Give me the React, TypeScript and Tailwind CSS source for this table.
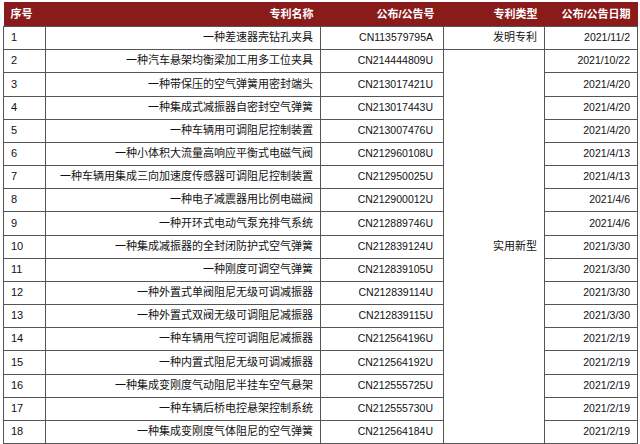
const rows: [string, string, string][] = [
  ['一种差速器壳钻孔夹具', 'CN113579795A', '2021/11/2'],
  ['一种汽车悬架均衡梁加工用多工位夹具', 'CN214444809U', '2021/10/22'],
  ['一种带保压的空气弹簧用密封端头', 'CN213017421U', '2021/4/20'],
  ['一种集成式减振器自密封空气弹簧', 'CN213017443U', '2021/4/20'],
  ['一种车辆用可调阻尼控制装置', 'CN213007476U', '2021/4/20'],
  ['一种小体积大流量高响应平衡式电磁气阀', 'CN212960108U', '2021/4/13'],
  ['一种车辆用集成三向加速度传感器可调阻尼控制装置', 'CN212950025U', '2021/4/13'],
  ['一种电子减震器用比例电磁阀', 'CN212900012U', '2021/4/6'],
  ['一种开环式电动气泵充排气系统', 'CN212889746U', '2021/4/6'],
  ['一种集成减振器的全封闭防护式空气弹簧', 'CN212839124U', '2021/3/30'],
  ['一种刚度可调空气弹簧', 'CN212839105U', '2021/3/30'],
  ['一种外置式单阀阻尼无级可调减振器', 'CN212839114U', '2021/3/30'],
  ['一种外置式双阀无级可调阻尼减振器', 'CN212839115U', '2021/3/30'],
  ['一种车辆用气控可调阻尼减振器', 'CN212564196U', '2021/2/19'],
  ['一种内置式阻尼无级可调减振器', 'CN212564192U', '2021/2/19'],
  ['一种集成变刚度气动阻尼半挂车空气悬架', 'CN212555725U', '2021/2/19'],
  ['一种车辆后桥电控悬架控制系统', 'CN212555730U', '2021/2/19'],
  ['一种集成变刚度气体阻尼的空气弹簧', 'CN212564184U', '2021/2/19'],
]

const cell = 'border border-[#555555] px-[7px] py-0 leading-none'

export default function App() {
  return (
    <div
      className="w-[640px] h-[444px] bg-white pt-[2px] pl-[3px] overflow-hidden text-[#111111]"
      style={{ fontFamily: '"Liberation Sans", "Noto Sans CJK SC", sans-serif' }}
    >
      <table className="border-collapse table-fixed w-[634px] text-[11px]">
        <colgroup>
          <col className="w-[42px]" />
          <col className="w-[275px]" />
          <col className="w-[123px]" />
          <col className="w-[101px]" />
          <col className="w-[93px]" />
        </colgroup>
        <thead>
          <tr className="h-[24px] bg-[#8a1b1b] text-white font-bold">
            <th className="px-[7px] text-left">序号</th>
            <th className="px-[7px] text-right">专利名称</th>
            <th className="px-[9px] text-right">公布/公告号</th>
            <th className="px-[7px] text-right">专利类型</th>
            <th className="px-[7px] text-right">公布/公告日期</th>
          </tr>
        </thead>
        <tbody>
          {rows.map(([name, no, date], i) => (
            <tr key={no} className={i % 6 === 2 ? 'h-[24px]' : 'h-[23px]'}>
              <td className={`${cell} text-left text-[11px]`}>{i + 1}</td>
              <td className={`${cell} text-right`}>{name}</td>
              <td className={`${cell} text-right text-[10.5px] pr-[10px]`}>{no}</td>
              {i === 0 && <td className={`${cell} text-right`}>发明专利</td>}
              {i === 1 && (
                <td rowSpan={17} className={`${cell} text-right align-middle`}>
                  实用新型
                </td>
              )}
              <td className={`${cell} text-right text-[10.5px]`}>{date}</td>
            </tr>
          ))}
        </tbody>
      </table>
    </div>
  )
}
